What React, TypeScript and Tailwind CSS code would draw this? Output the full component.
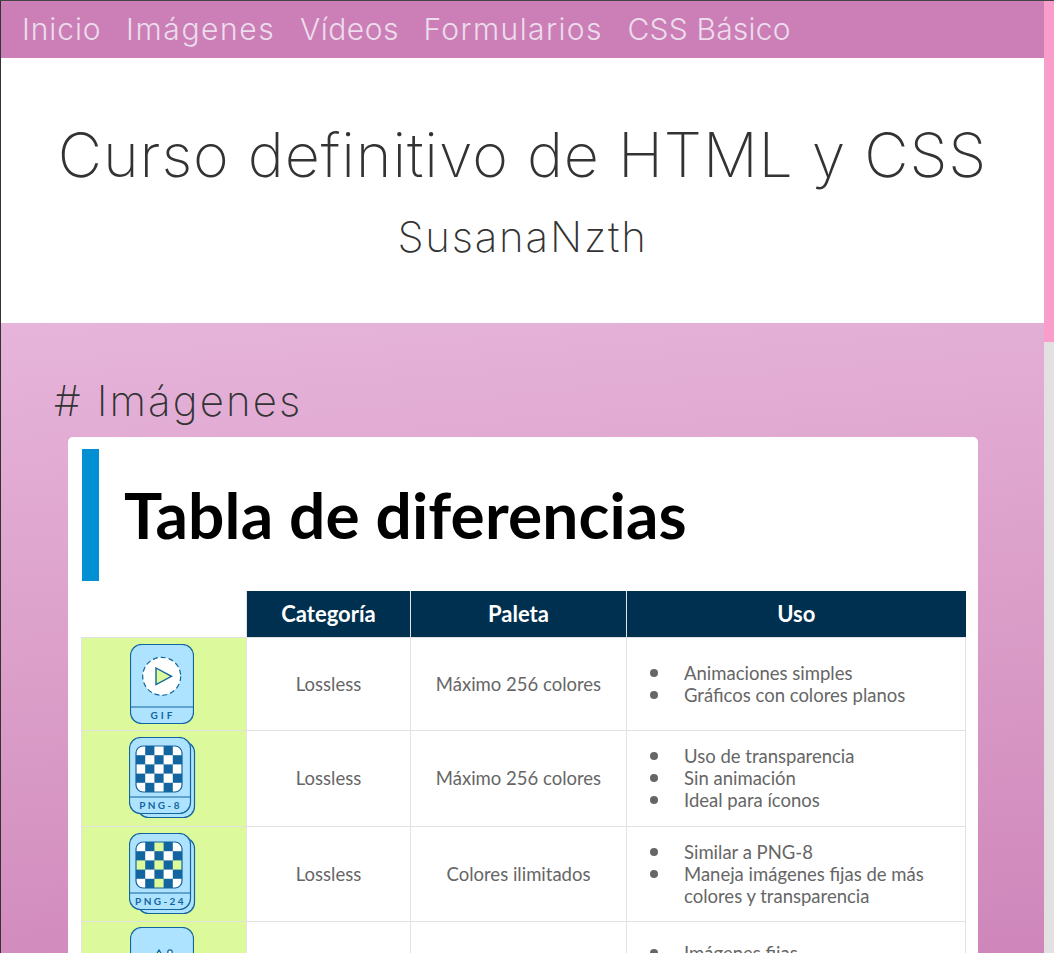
const navItems = [
  { label: "Inicio", className: "tracking-[0.9px]" },
  { label: "Imágenes", className: "tracking-[1.6px]" },
  { label: "Vídeos", className: "tracking-[0.5px]" },
  { label: "Formularios", className: "tracking-[1.4px]" },
  { label: "CSS Básico", className: "tracking-[0.2px]" },
];

// Iconos de los formatos, dibujados a mano
function GifIcon() {
  return (
    <svg width="64" height="80" viewBox="0 0 64 80" className="block">
      <rect x="0.5" y="0.5" width="63" height="79" rx="11" fill="#aee3ff" stroke="#12659f" strokeWidth="1.2" />
      <line x1="0.5" y1="63" x2="63.5" y2="63" stroke="#12659f" strokeWidth="1.2" />
      <circle cx="31.7" cy="32.3" r="19" fill="#fff" stroke="#12659f" strokeWidth="1.2" strokeDasharray="5 3" />
      <path d="M26 24 L41.5 32.3 L26 40.5 Z" fill="#dcfa9b" stroke="#12659f" strokeWidth="1.4" />
      <text x="33" y="74.5" textAnchor="middle" fontFamily="Lato" fontWeight="700" fontSize="10" letterSpacing="3" fill="#12659f">GIF</text>
    </svg>
  );
}

function Checker({ label, accent, spacing }: { label: string; accent: boolean; spacing: number }) {
  const cells = [];
  for (let r = 0; r < 5; r++) {
    for (let c = 0; c < 5; c++) {
      if ((r + c) % 2 === 0) {
        const green = accent && (r === 2 || c === 2);
        cells.push(
          <rect key={`${r}-${c}`} x={7 + c * 9.2} y={9 + r * 9.2} width="9.2" height="9.2" fill={green ? "#dcfa9b" : "#fff"} />
        );
      }
    }
  }
  return (
    <svg width="67" height="82" viewBox="0 0 67 82" className="block">
      <rect x="8.5" y="4.5" width="57" height="76" rx="11" fill="#aee3ff" stroke="#12659f" strokeWidth="1.2" />
      <rect x="0.5" y="0.5" width="61" height="76" rx="11" fill="#aee3ff" stroke="#12659f" strokeWidth="1.2" />
      <line x1="0.5" y1="60" x2="61.5" y2="60" stroke="#12659f" strokeWidth="1.2" />
      <clipPath id={`clip-${label}`}>
        <rect x="7" y="9" width="46" height="46" rx="7" />
      </clipPath>
      <g clipPath={`url(#clip-${label})`}>
        <rect x="7" y="9" width="46" height="46" fill="#12659f" />
        {cells}
      </g>
      <rect x="7" y="9" width="46" height="46" rx="7" fill="none" stroke="#12659f" strokeWidth="1.2" />
      <text x="31.5" y="71.5" textAnchor="middle" fontFamily="Lato" fontWeight="700" fontSize="10" letterSpacing={spacing} fill="#12659f">{label}</text>
    </svg>
  );
}

function PhotoIcon() {
  return (
    <svg width="64" height="80" viewBox="0 0 64 80" className="block">
      <rect x="0.5" y="0.5" width="63" height="79" rx="11" fill="#aee3ff" stroke="#12659f" strokeWidth="1.2" />
      <circle cx="40" cy="25" r="2.2" fill="#fff" stroke="#12659f" strokeWidth="1.2" />
      <path d="M20 38 L29 23 L38 38 Z" fill="#dcfa9b" stroke="#12659f" strokeWidth="1.2" />
    </svg>
  );
}

function UseList({ items }: { items: string[] }) {
  return (
    <ul className="flex flex-col pr-[30px] pl-[23px] text-left">
      {items.map((item) => (
        <li key={item} className="flex gap-[26px]">
          <span className="mt-[7px] size-2 shrink-0 rounded-full bg-[#666]" />
          <span>{item}</span>
        </li>
      ))}
    </ul>
  );
}

const rows = [
  { icon: <GifIcon />, cat: "Lossless", pal: "Máximo 256 colores", uses: ["Animaciones simples", "Gráficos con colores planos"], h: "h-[93px]", iconCell: "", iconWrap: "pr-[5px]" },
  { icon: <Checker label="PNG-8" accent={false} spacing={2.4} />, cat: "Lossless", pal: "Máximo 256 colores", uses: ["Uso de transparencia", "Sin animación", "Ideal para íconos"], h: "h-[96px]", iconCell: "", iconWrap: "pr-[3px]" },
  { icon: <Checker label="PNG-24" accent spacing={2.4} />, cat: "Lossless", pal: "Colores ilimitados", uses: ["Similar a PNG-8", "Maneja imágenes fijas de más colores y transparencia"], h: "h-[95px]", iconCell: "", iconWrap: "pr-[3px]" },
  { icon: <PhotoIcon />, cat: "Lossy", pal: "Millones de colores", uses: ["Imágenes fijas", "Fotografías", "Sin transparencia"], h: "h-[108px]", iconCell: "pt-[5px] align-top", iconWrap: "pr-[5px]" },
];

export default function App() {
  return (
    <div className="flex h-screen overflow-hidden border-t border-t-[#444] font-['Inter',sans-serif]">
      <div className="flex min-w-0 flex-1 flex-col border-l border-l-[#333]">
        <nav className="flex h-[57px] shrink-0 items-center gap-[24.6px] bg-[#cb7fb6] pl-[21px] text-[30px] font-light text-[#ecdcec]">
          {navItems.map((item) => (
            <a key={item.label} href="#" className={item.className}>{item.label}</a>
          ))}
        </nav>

        <header className="flex h-[265px] shrink-0 flex-col items-center bg-white font-light text-[#333]">
          <h1 className="mt-[59px] text-[61px] leading-[76px] font-extralight tracking-[0.9px]">Curso definitivo de HTML y CSS</h1>
          <h2 className="mt-[19px] text-[42px] leading-[50px] font-extralight tracking-[1.8px]">SusanaNzth</h2>
        </header>

        <main className="flex-1 bg-[linear-gradient(175deg,#e6b4db_0%,#dca0ca_40%,#cb7fb6_100%)] pl-[53px]">
          <h2 className="mt-[51px] text-[42px] leading-[54px] font-extralight tracking-[2.1px] text-[#333]"># Imágenes</h2>
          <section className="mt-[9px] ml-[14px] w-[910px] rounded-[5px] bg-white px-[13px] pt-[12px] pb-8 font-['Lato',sans-serif]">
            <div className="ml-px flex h-[132px] items-center border-l-[17px] border-[#0390d2] pl-[25px]">
              <h3 className="text-[64px] font-bold tracking-[0.15px] text-black">Tabla de diferencias</h3>
            </div>
            <table className="mt-[10px] w-[884px] table-fixed border-collapse text-center text-[18.5px] leading-[22px] text-[#666]">
              <colgroup>
                <col className="w-[165px]" />
                <col className="w-[164px]" />
                <col className="w-[216px]" />
                <col className="w-[339px]" />
              </colgroup>
              <thead>
                <tr className="h-[46px] bg-[#00304f] text-[22px] font-bold text-white">
                  <th className="bg-white" />
                  <th className="border-x border-[#e2e2e2] pt-px">Categoría</th>
                  <th className="border-x border-[#e2e2e2] pt-px">Paleta</th>
                  <th className="pt-px">Uso</th>
                </tr>
              </thead>
              <tbody>
                {rows.map((row) => (
                  <tr key={row.uses[0]} className={row.h}>
                    <td className={`border border-[#e2e2e2] bg-[#dcfa9b] ${row.iconCell}`}>
                      <div className={`flex justify-center ${row.iconWrap}`}>{row.icon}</div>
                    </td>
                    <td className="border border-[#e2e2e2]">{row.cat}</td>
                    <td className="border border-[#e2e2e2]">{row.pal}</td>
                    <td className="border border-[#e2e2e2]">
                      <UseList items={row.uses} />
                    </td>
                  </tr>
                ))}
              </tbody>
            </table>
          </section>
        </main>
      </div>

      {/* scrollbar */}
      <div className="flex w-[10px] shrink-0 flex-col bg-[#e3e0e1]">
        <div className="h-[341px] bg-[#f99dcb]" />
      </div>
    </div>
  );
}
